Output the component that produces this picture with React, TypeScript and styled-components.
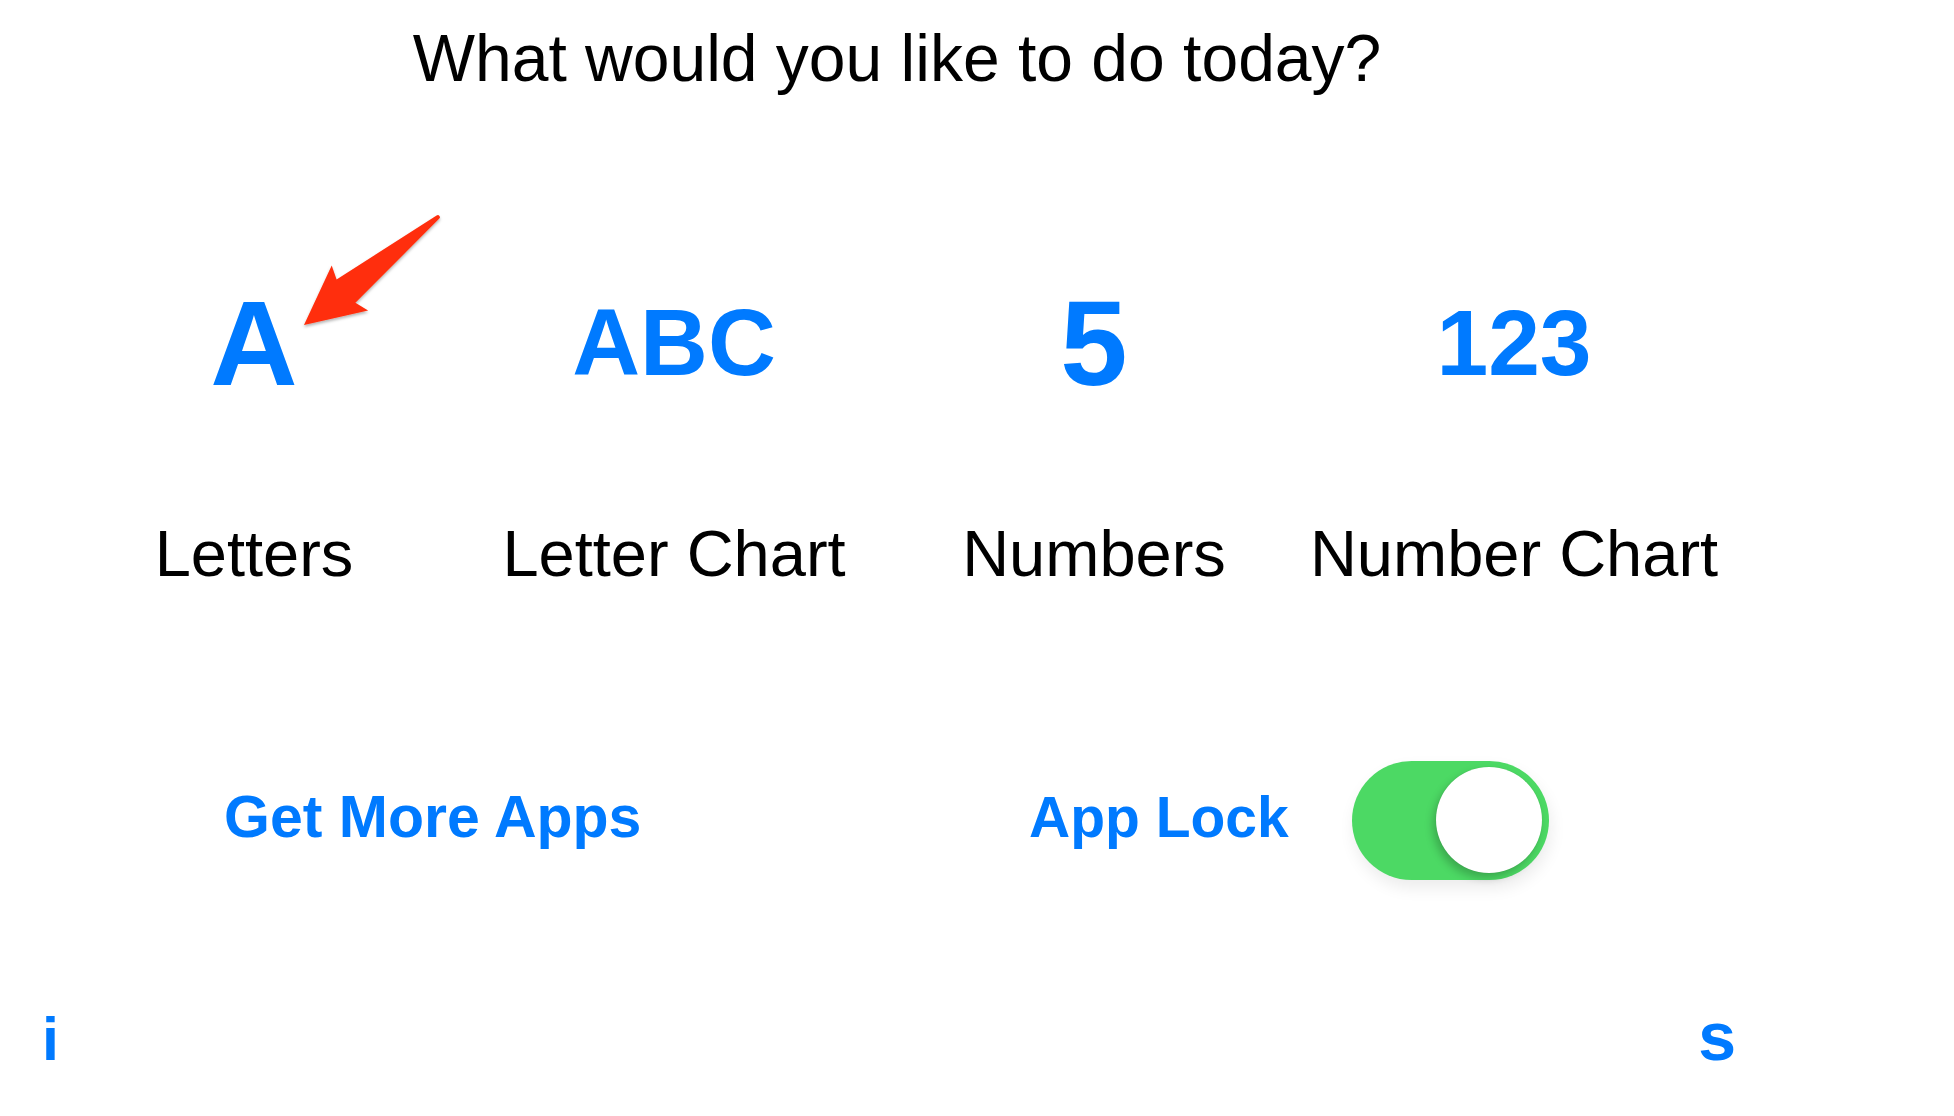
import styled, { createGlobalStyle } from "styled-components";

const GlobalStyle = createGlobalStyle`
    html, body {
        margin: 0;
        padding: 0;
        background: #ffffff;
    }
    body {
        font-family: "Liberation Sans", Arial, sans-serif;
        color: #000000;
    }
`;

const BLUE = "#007aff";

const Page = styled.div`
    position: relative;
    width: 1954px;
    height: 1116px;
    overflow: hidden;
    display: flex;
    flex-direction: column;
`;

const Title = styled.h1`
    margin: 0;
    padding-top: 25px;
    width: 1794px;
    text-align: center;
    font-size: 66px;
    line-height: 66px;
    font-weight: 400;
`;

const Tiles = styled.div`
    display: grid;
    grid-template-columns: repeat(4, 420px);
    margin: 162px 0 0 44px;
`;

const Tile = styled.button`
    display: flex;
    flex-direction: column;
    align-items: center;
    background: none;
    border: none;
    padding: 0;
    font-family: inherit;
    cursor: pointer;
`;

const Glyph = styled.span<{ $size: number }>`
    height: 180px;
    line-height: 180px;
    font-size: ${(p) => p.$size}px;
    font-weight: 700;
    color: ${BLUE};
`;

const Label = styled.span`
    margin-top: 88px;
    font-size: 65px;
    line-height: 65px;
    color: #000000;
`;

const Actions = styled.div`
    display: grid;
    grid-template-columns: 805px max-content max-content;
    justify-content: start;
    align-items: center;
    height: 120px;
    margin: 174px 0 0 224px;
`;

const LinkText = styled.a<{ $size: number; $gap?: number }>`
    font-size: ${(p) => p.$size}px;
    line-height: 56px;
    font-weight: 700;
    color: ${BLUE};
    text-decoration: none;
    padding-bottom: 6px;
    margin-right: ${(p) => p.$gap ?? 0}px;
    justify-self: start;
`;

const Track = styled.div<{ $on: boolean }>`
    display: flex;
    justify-content: ${(p) => (p.$on ? "flex-end" : "flex-start")};
    align-items: center;
    box-sizing: border-box;
    width: 197px;
    height: 119px;
    padding: 0 7px;
    border-radius: 60px;
    background: ${(p) => (p.$on ? "#4cd964" : "#e5e5ea")};
    box-shadow: 2px 8px 16px rgba(0, 0, 0, 0.08);
`;

const Knob = styled.div`
    width: 106px;
    height: 106px;
    border-radius: 50%;
    background: #ffffff;
    box-shadow: -3px 5px 9px rgba(0, 0, 0, 0.22), 0 0 1px rgba(0, 0, 0, 0.15);
`;

const Footer = styled.div`
    display: flex;
    justify-content: space-between;
    align-items: baseline;
    margin-top: 124px;
    padding: 0 218px 0 42px;
`;

const Corner = styled.span<{ $size: number }>`
    font-size: ${(p) => p.$size}px;
    line-height: 64px;
    font-weight: 700;
    color: ${BLUE};
`;

const Arrow = styled.svg`
    position: absolute;
    left: 300px;
    top: 210px;
    width: 145px;
    height: 120px;
    overflow: visible;
`;

const tiles = [
    { glyph: "A", size: 121, label: "Letters" },
    { glyph: "ABC", size: 94, label: "Letter Chart" },
    { glyph: "5", size: 121, label: "Numbers" },
    { glyph: "123", size: 93, label: "Number Chart" },
];

export default function App() {
    return (
        <>
            <GlobalStyle />
            <Page>
                <Title>What would you like to do today?</Title>
                <Tiles>
                    {tiles.map((t) => (
                        <Tile key={t.label}>
                            <Glyph $size={t.size}>{t.glyph}</Glyph>
                            <Label>{t.label}</Label>
                        </Tile>
                    ))}
                </Tiles>
                <Actions>
                    <LinkText href="#" $size={59}>Get More Apps</LinkText>
                    <LinkText href="#" $size={57} $gap={63}>App Lock</LinkText>
                    <Track $on={true}>
                        <Knob />
                    </Track>
                </Actions>
                <Footer>
                    <Corner $size={61}>i</Corner>
                    <Corner $size={68}>s</Corner>
                </Footer>
                {/* annotation arrow pointing at the first tile */}
                <Arrow viewBox="0 0 145 120">
                    <defs>
                        <filter id="arrowShadow" x="-20%" y="-20%" width="140%" height="140%">
                            <feDropShadow dx="0" dy="2" stdDeviation="1.5" floodColor="#000" floodOpacity="0.3" />
                        </filter>
                    </defs>
                    <path
                        d="M4 115 L31.7 55.4 L36.6 69.4 L136.6 5.6 A2 2 0 0 1 139.1 8.8 L55.4 92.8 L68.1 100.6 Z"
                        fill="#ff2d0a"
                        filter="url(#arrowShadow)"
                    />
                </Arrow>
            </Page>
        </>
    );
}
